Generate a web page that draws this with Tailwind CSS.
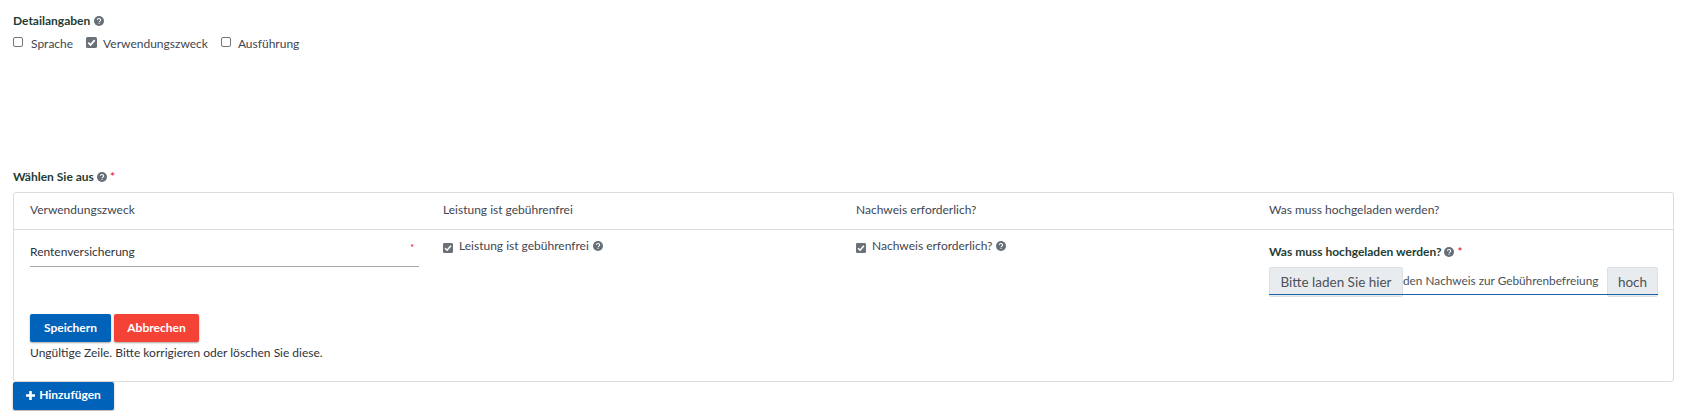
<!DOCTYPE html>
<html lang="de">
<head>
  <meta charset="UTF-8" />
  <title>Detailangaben</title>
  <script src="https://cdn.jsdelivr.net/npm/@tailwindcss/browser@4"></script>
</head>
<body class="bg-white text-[12px] text-[#3f4650] font-['Lato','Open_Sans',sans-serif] h-[411px] overflow-hidden">
  <svg class="hidden">
    <symbol id="help" viewBox="0 0 16 16">
      <circle cx="8" cy="8" r="8" fill="#666e78" />
      <path d="M5.400 6.200C5.500 4.800 6.600 4 8 4c1.500 0 2.600.9 2.600 2.200 0 1-.6 1.500-1.300 2-.6.4-.8.700-.8 1.300" fill="none" stroke="#fff" stroke-width="1.700" />
      <rect x="7.100" y="10.700" width="1.800" height="1.800" fill="#fff" />
    </symbol>
    <symbol id="checked" viewBox="0 0 11 11">
      <rect width="11" height="11" rx="1.500" fill="#6c7178" />
      <path d="M2.300 5.700l2.200 2.200 4.200-4.800" fill="none" stroke="#fff" stroke-width="1.700" />
    </symbol>
  </svg>

  <div class="pl-[13px] pr-[16px]">
    <section class="h-[170px] pt-[14px]">
      <div class="flex items-center gap-[4px] h-[14px] font-bold text-[#1f3d33]">
        Detailangaben
        <svg class="w-[10px] h-[10px]"><use href="#help" /></svg>
      </div>
      <div class="flex items-start h-[14px] mt-[9px] leading-[14px]">
        <span class="w-[10px] h-[10px] rounded-[2px] border border-[#767676] bg-white"></span>
        <span class="ml-[8px]">Sprache</span>
        <svg class="w-[11px] h-[11px] ml-[13px]"><use href="#checked" /></svg>
        <span class="ml-[6px]">Verwendungszweck</span>
        <span class="w-[10px] h-[10px] rounded-[2px] border border-[#767676] bg-white ml-[13px]"></span>
        <span class="ml-[7px]">Ausführung</span>
      </div>
    </section>

    <div class="flex items-center gap-[3px] h-[14px] font-bold text-[#1f3d33]">
      Wählen Sie aus
      <svg class="w-[10px] h-[10px]"><use href="#help" /></svg>
      <span class="text-red-600 font-normal">*</span>
    </div>

    <div class="mt-[8px] h-[190px] border border-[#dcdcdc] rounded-[3px] flex flex-col">
      <div class="grid grid-cols-[repeat(4,413px)] h-[37px] items-center pl-[16px] pb-[3px] border-b border-[#dcdcdc]">
        <div>Verwendungszweck</div>
        <div>Leistung ist gebührenfrei</div>
        <div>Nachweis erforderlich?</div>
        <div>Was muss hochgeladen werden?</div>
      </div>

      <div class="grid grid-cols-[repeat(4,413px)] pl-[16px] h-[84px]">
        <div class="pt-[13px] pr-[24px] relative">
          <div class="h-[24px] border-b border-[#a8a8a8] text-[#2f343a]">Rentenversicherung</div>
          <span class="absolute right-[29px] top-[11px] text-red-600 text-[9px]">*</span>
        </div>
        <div class="flex items-start gap-[6px] pt-[9px] h-[28px] leading-[14px]">
          <svg class="w-[10px] h-[10px] mt-[4px]"><use href="#checked" /></svg>
          <span>Leistung ist gebührenfrei</span>
          <svg class="w-[10px] h-[10px] mt-[2px] -ml-[2px]"><use href="#help" /></svg>
        </div>
        <div class="flex items-start gap-[6px] pt-[9px] h-[28px] leading-[14px]">
          <svg class="w-[10px] h-[10px] mt-[4px]"><use href="#checked" /></svg>
          <span>Nachweis erforderlich?</span>
          <svg class="w-[10px] h-[10px] mt-[2px] -ml-[2px]"><use href="#help" /></svg>
        </div>
        <div class="pt-[15px]">
          <div class="flex items-center gap-[3px] h-[14px] font-bold text-[#1f3d33]">
            Was muss hochgeladen werden?
            <svg class="w-[10px] h-[10px]"><use href="#help" /></svg>
            <span class="text-red-600 font-normal">*</span>
          </div>
          <div class="flex items-center h-[30px] mt-[8px] relative w-[389px]">
            <span class="flex items-center h-[30px] w-[134px] justify-center bg-[#e9ecef] border border-[#dcdfe3] rounded-[2px] text-[13.500px] text-[#4b5158] shrink-0 pt-[1px]">Bitte laden Sie hier</span>
            <span class="flex-1 whitespace-nowrap overflow-hidden text-[11.800px] text-[#4b5158] -mt-[3px]">den Nachweis zur Gebührenbefreiung</span>
            <span class="flex items-center h-[30px] w-[51px] justify-center bg-[#e9ecef] border border-[#dcdfe3] rounded-[2px] text-[13.500px] text-[#4b5158] shrink-0 pt-[1px]">hoch</span>
            <div class="absolute left-0 right-0 bottom-[2px] h-[1px] bg-[#1c62a8]"></div>
          </div>
        </div>
      </div>

      <div class="px-[16px]">
        <div class="flex gap-[3px]">
          <button class="h-[28px] w-[81px] rounded-[2px] bg-[#0062b8] text-white font-bold pb-[1px] shadow-[0_1px_2px_rgba(0,0,0,0.35)]">Speichern</button>
          <button class="h-[28px] w-[85px] rounded-[2px] bg-[#f44336] text-white font-bold pb-[1px] shadow-[0_1px_2px_rgba(0,0,0,0.35)]">Abbrechen</button>
        </div>
        <p class="mt-[2px] text-[#2f343a]">Ungültige Zeile. Bitte korrigieren oder löschen Sie diese.</p>
      </div>
    </div>

    <button class="flex items-center justify-center gap-[4px] w-[101px] h-[28px] rounded-[2px] bg-[#0062b8] text-white font-bold pb-[2px] shadow-[0_1px_2px_rgba(0,0,0,0.35)]">
      <svg class="w-[9px] h-[9px]" viewBox="0 0 9 9"><path d="M4.500 0v9M0 4.500h9" stroke="#fff" stroke-width="2.600" /></svg>
      Hinzufügen
    </button>
  </div>
</body>
</html>
